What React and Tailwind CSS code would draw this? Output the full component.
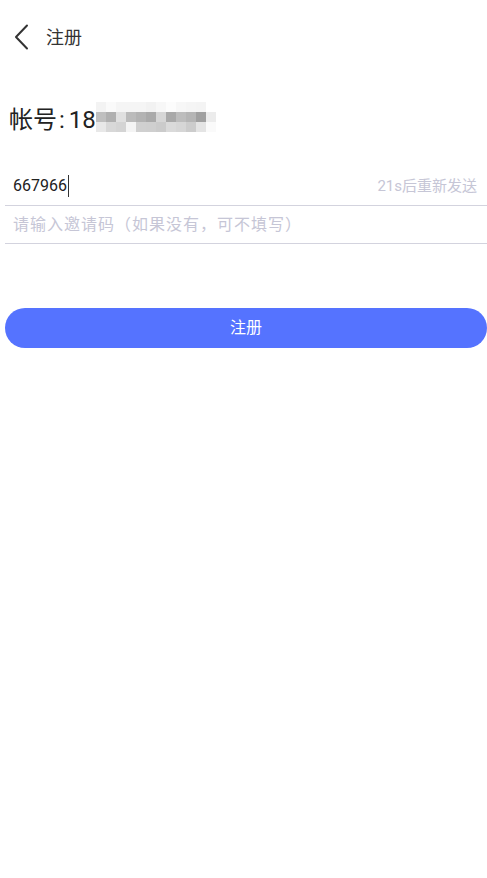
const blurRows = [
  ['#f3f3f3', '#fafafa', '#f5f5f5', '#f5f5f5', '#f5f5f5', '#f2f2f2', '#f7f7f7', '#fcfcfc', '#f7f7f7', '#f5f5f5', '#f4f4f4', '#ffffff'],
  ['#bfbfbf', '#b0b0b0', '#e0e0e0', '#bbbbbb', '#b3b3b3', '#aaaaaa', '#d6d6d6', '#a9a9a9', '#bdbdbd', '#b5b5b5', '#a0a0a0', '#ececec'],
  ['#e8e8e8', '#d8d8d8', '#d4d4d4', '#f4f4f4', '#d0d0d0', '#cfcfcf', '#cbcbcb', '#dadada', '#d6d6d6', '#cccccc', '#e4e4e4', '#fafafa'],
];

function MaskedDigits() {
  // pixelated mosaic over the rest of the phone number
  return (
    <div className="grid grid-cols-[repeat(12,10px)] grid-rows-[repeat(3,10px)]">
      {blurRows.flat().map((c, i) => (
        <div key={i} style={{ backgroundColor: c }} />
      ))}
    </div>
  );
}

export default function App() {
  return (
    <div className="min-h-[878px] w-full bg-white text-[#222] font-['Roboto','Noto_Sans_CJK_SC',sans-serif]">
      <header className="flex h-[74px] items-center pl-[14px]">
        <svg width="15" height="26" viewBox="0 0 15 26" fill="none" className="shrink-0">
          <path d="M13 1.5 L2 13 L13 24.5" stroke="#333" strokeWidth="2" strokeLinecap="round" strokeLinejoin="round" />
        </svg>
        <span className="ml-[17px] text-[18px] text-[#333]">注册</span>
      </header>

      <div className="mt-[28px] flex items-start pl-[9px]">
        <span className="flex text-[24px] leading-[36px] text-[#222]">
          <span>帐号</span>
          <span className="ml-[2px]">:</span>
          <span className="ml-[4px]">18</span>
        </span>
        <MaskedDigits />
      </div>

      <div className="mt-[29px] ml-[5px]">
        <div className="flex h-[39px] items-center justify-between border-b border-[#d3d3de] pl-[8px] pr-[10px]">
          <span className="flex items-center text-[16px]">
            667966
            <span className="ml-px h-[22px] w-px bg-[#333]" />
          </span>
          <span className="text-[15px] text-[#c6c6d6]">21s后重新发送</span>
        </div>
        <div className="flex h-[38px] items-center border-b border-[#d3d3de] pl-[8px]">
          <span className="text-[16px] tracking-[1px] text-[#c6c6d6]">请输入邀请码（如果没有，可不填写）</span>
        </div>
      </div>

      <div className="mt-[64px] ml-[5px]">
        <button type="button" className="flex h-[40px] w-full items-center justify-center rounded-full bg-[#5573ff] text-[16px] text-white">
          注册
        </button>
      </div>
    </div>
  );
}
